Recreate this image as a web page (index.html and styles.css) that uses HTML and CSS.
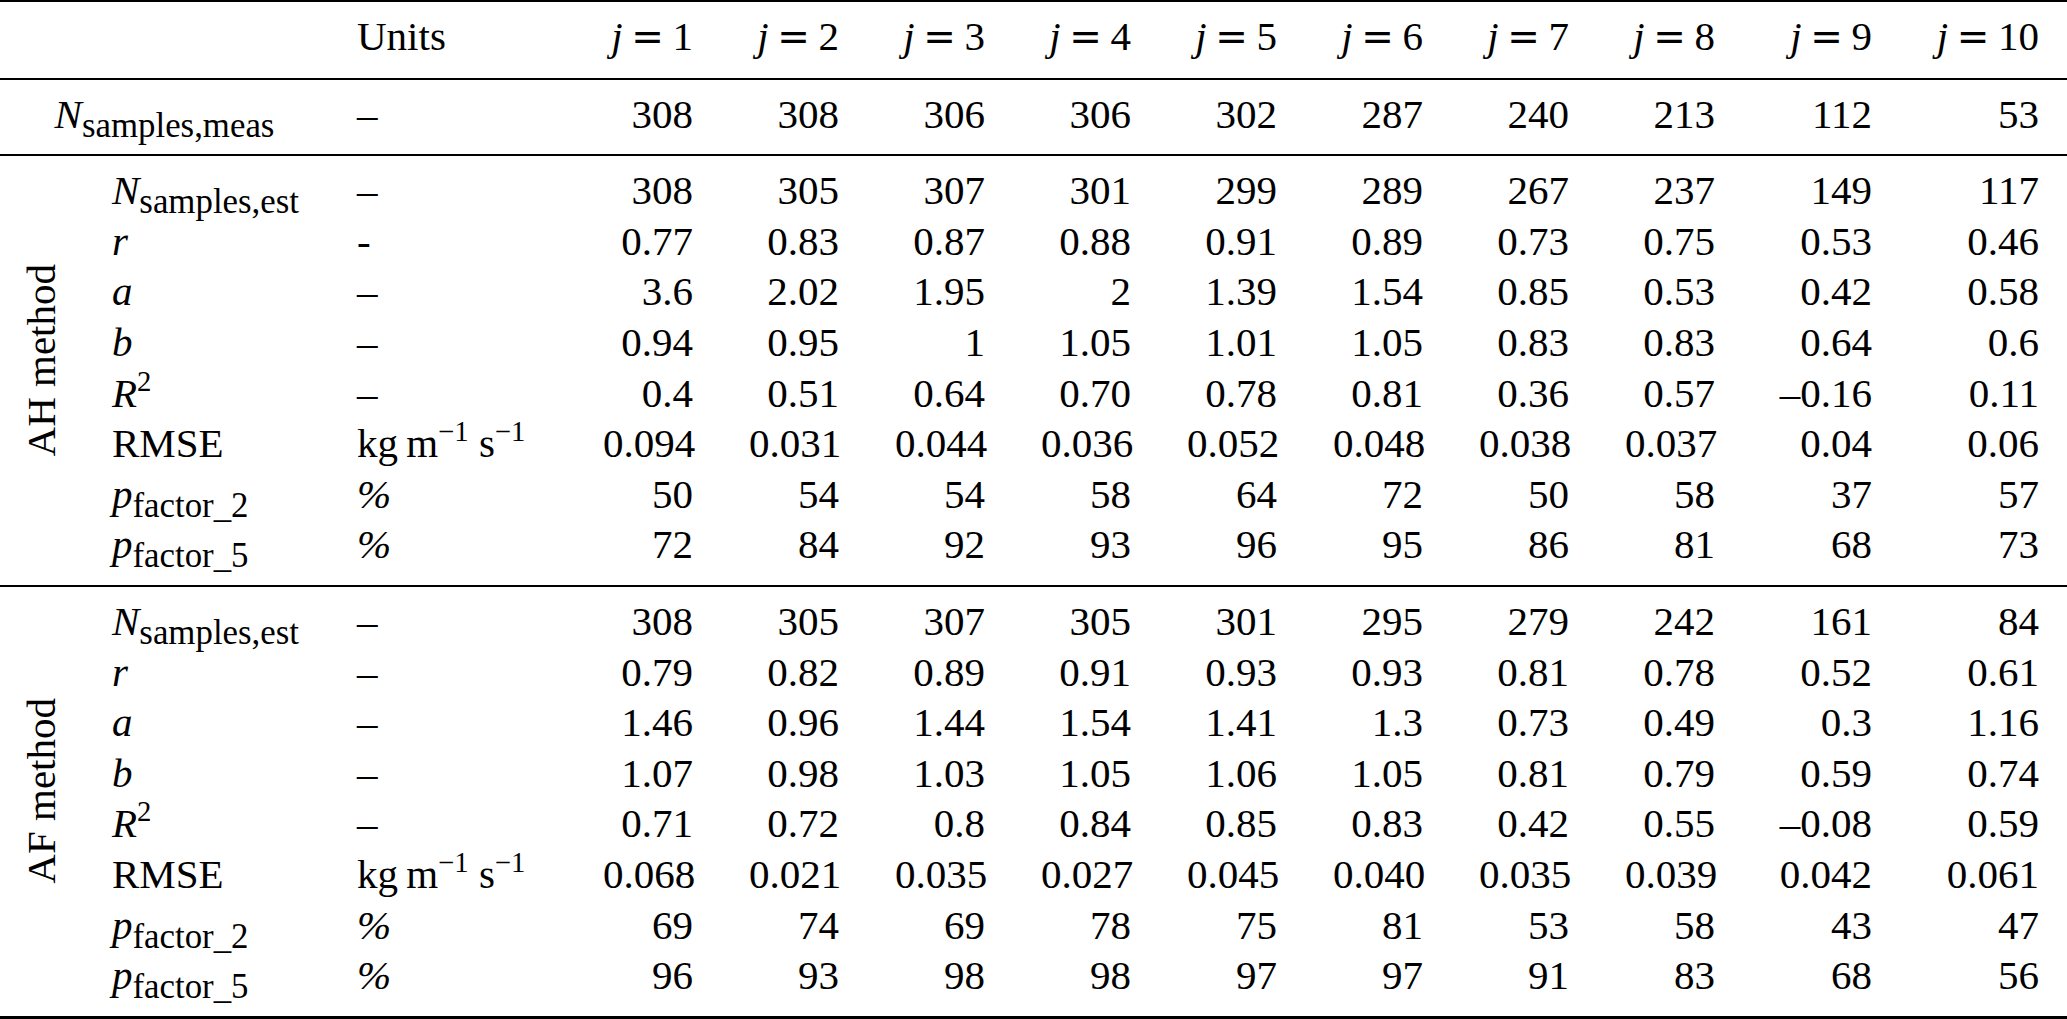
FILE: index.html
```html
<!DOCTYPE html>
<html>
<head>
	<link rel="stylesheet" href="styles.css">
</head>
<body>
	<table class="results">
		<colgroup>
			<col class="c-method"><col class="c-label"><col class="c-unit">
			<col class="c-num"><col class="c-num"><col class="c-num"><col class="c-num"><col class="c-num">
			<col class="c-num"><col class="c-num"><col class="c-num"><col class="c-num9"><col class="c-num10">
		</colgroup>
		<thead>
			<tr class="first last">
				<th colspan="2"></th>
				<th class="unit">Units</th>
				<th><i>j</i><span class="eq">=</span>1</th>
				<th><i>j</i><span class="eq">=</span>2</th>
				<th><i>j</i><span class="eq">=</span>3</th>
				<th><i>j</i><span class="eq">=</span>4</th>
				<th><i>j</i><span class="eq">=</span>5</th>
				<th><i>j</i><span class="eq">=</span>6</th>
				<th><i>j</i><span class="eq">=</span>7</th>
				<th><i>j</i><span class="eq">=</span>8</th>
				<th><i>j</i><span class="eq">=</span>9</th>
				<th><i>j</i><span class="eq">=</span>10</th>
			</tr>
		</thead>
		<tbody>
			<tr class="first last">
				<td colspan="2" class="meas"><i>N</i><span class="sub">samples,meas</span></td>
				<td class="unit">–</td>
				<td>308</td><td>308</td><td>306</td><td>306</td><td>302</td><td>287</td><td>240</td><td>213</td><td>112</td><td>53</td>
			</tr>
		</tbody>
		<tbody>
			<tr class="first">
				<td rowspan="8" class="method"><span class="vlabel">AH method</span></td>
				<td class="label"><i>N</i><span class="sub">samples,est</span></td>
				<td class="unit">–</td>
				<td>308</td><td>305</td><td>307</td><td>301</td><td>299</td><td>289</td><td>267</td><td>237</td><td>149</td><td>117</td>
			</tr>
			<tr>
				<td class="label"><i>r</i></td>
				<td class="unit">-</td>
				<td>0.77</td><td>0.83</td><td>0.87</td><td>0.88</td><td>0.91</td><td>0.89</td><td>0.73</td><td>0.75</td><td>0.53</td><td>0.46</td>
			</tr>
			<tr>
				<td class="label"><i>a</i></td>
				<td class="unit">–</td>
				<td>3.6</td><td>2.02</td><td>1.95</td><td>2</td><td>1.39</td><td>1.54</td><td>0.85</td><td>0.53</td><td>0.42</td><td>0.58</td>
			</tr>
			<tr>
				<td class="label"><i>b</i></td>
				<td class="unit">–</td>
				<td>0.94</td><td>0.95</td><td>1</td><td>1.05</td><td>1.01</td><td>1.05</td><td>0.83</td><td>0.83</td><td>0.64</td><td>0.6</td>
			</tr>
			<tr>
				<td class="label"><i>R</i><span class="sup">2</span></td>
				<td class="unit">–</td>
				<td>0.4</td><td>0.51</td><td>0.64</td><td>0.70</td><td>0.78</td><td>0.81</td><td>0.36</td><td>0.57</td><td>–0.16</td><td>0.11</td>
			</tr>
			<tr>
				<td class="label">RMSE</td>
				<td class="unit">kg&#8201;m<span class="sup">−1</span> s<span class="sup">−1</span></td>
				<td>0.094</td><td>0.031</td><td>0.044</td><td>0.036</td><td>0.052</td><td>0.048</td><td>0.038</td><td>0.037</td><td>0.04</td><td>0.06</td>
			</tr>
			<tr>
				<td class="label"><i>p</i><span class="sub">factor_2</span></td>
				<td class="unit"><i>%</i></td>
				<td>50</td><td>54</td><td>54</td><td>58</td><td>64</td><td>72</td><td>50</td><td>58</td><td>37</td><td>57</td>
			</tr>
			<tr class="last">
				<td class="label"><i>p</i><span class="sub">factor_5</span></td>
				<td class="unit"><i>%</i></td>
				<td>72</td><td>84</td><td>92</td><td>93</td><td>96</td><td>95</td><td>86</td><td>81</td><td>68</td><td>73</td>
			</tr>
		</tbody>
		<tbody>
			<tr class="first">
				<td rowspan="8" class="method"><span class="vlabel">AF method</span></td>
				<td class="label"><i>N</i><span class="sub">samples,est</span></td>
				<td class="unit">–</td>
				<td>308</td><td>305</td><td>307</td><td>305</td><td>301</td><td>295</td><td>279</td><td>242</td><td>161</td><td>84</td>
			</tr>
			<tr>
				<td class="label"><i>r</i></td>
				<td class="unit">–</td>
				<td>0.79</td><td>0.82</td><td>0.89</td><td>0.91</td><td>0.93</td><td>0.93</td><td>0.81</td><td>0.78</td><td>0.52</td><td>0.61</td>
			</tr>
			<tr>
				<td class="label"><i>a</i></td>
				<td class="unit">–</td>
				<td>1.46</td><td>0.96</td><td>1.44</td><td>1.54</td><td>1.41</td><td>1.3</td><td>0.73</td><td>0.49</td><td>0.3</td><td>1.16</td>
			</tr>
			<tr>
				<td class="label"><i>b</i></td>
				<td class="unit">–</td>
				<td>1.07</td><td>0.98</td><td>1.03</td><td>1.05</td><td>1.06</td><td>1.05</td><td>0.81</td><td>0.79</td><td>0.59</td><td>0.74</td>
			</tr>
			<tr>
				<td class="label"><i>R</i><span class="sup">2</span></td>
				<td class="unit">–</td>
				<td>0.71</td><td>0.72</td><td>0.8</td><td>0.84</td><td>0.85</td><td>0.83</td><td>0.42</td><td>0.55</td><td>–0.08</td><td>0.59</td>
			</tr>
			<tr>
				<td class="label">RMSE</td>
				<td class="unit">kg&#8201;m<span class="sup">−1</span> s<span class="sup">−1</span></td>
				<td>0.068</td><td>0.021</td><td>0.035</td><td>0.027</td><td>0.045</td><td>0.040</td><td>0.035</td><td>0.039</td><td>0.042</td><td>0.061</td>
			</tr>
			<tr>
				<td class="label"><i>p</i><span class="sub">factor_2</span></td>
				<td class="unit"><i>%</i></td>
				<td>69</td><td>74</td><td>69</td><td>78</td><td>75</td><td>81</td><td>53</td><td>58</td><td>43</td><td>47</td>
			</tr>
			<tr class="last">
				<td class="label"><i>p</i><span class="sub">factor_5</span></td>
				<td class="unit"><i>%</i></td>
				<td>96</td><td>93</td><td>98</td><td>98</td><td>97</td><td>97</td><td>91</td><td>83</td><td>68</td><td>56</td>
			</tr>
		</tbody>
	</table>
</body>
</html>
```

FILE: styles.css
```css
body {margin:0;background:#fff;color:#000;font-family:"Liberation Serif","Times New Roman",serif;font-size:41px;}
.results {border-collapse:collapse;table-layout:fixed;width:2067px;border-top:2px solid #000;border-bottom:3px solid #000;}
.c-method {width:84px;}
.c-label {width:245px;}
.c-unit {width:246px;}
.c-num {width:146px;}
.c-num9 {width:157px;}
.c-num10 {width:167px;}
.results th, .results td {padding:0 28px;line-height:50.6px;white-space:nowrap;font-weight:normal;text-align:right;vertical-align:baseline;}
.results tbody tr.first td {border-top:2px solid #000;}
.results thead th {border-bottom:2px solid #000;}
.results tr.first th, .results tr.first td {padding-top:9px;}
.results tr.last th, .results tr.last td {padding-bottom:15px;}
.results .label, .results .unit {text-align:left;}
.results .meas {text-align:center;}
.results td.method {vertical-align:middle;padding:0 0 18px 27px;text-align:left;}
.vlabel {display:inline-block;writing-mode:vertical-rl;transform:rotate(180deg);line-height:28px;}
.sub {font-size:0.85em;vertical-align:-0.25em;line-height:0;}
.sup {font-size:0.7em;vertical-align:0.55em;line-height:0;}
.eq {font-family:"DejaVu Sans",sans-serif;font-size:0.95em;margin:0 0.22em;}
```
